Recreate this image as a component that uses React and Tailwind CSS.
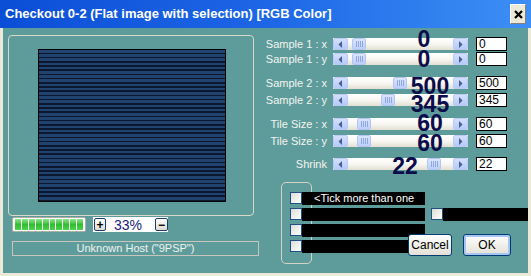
import React from 'react';

const rows = [
    { label: 'Sample 1 : x', value: '0', thumb: 19, rowCls: 'mt-0', numCls: 'top-[-10px] left-[61px]' },
    { label: 'Sample 1 : y', value: '0', thumb: 19, rowCls: 'mt-px', numCls: 'top-[-5px] left-[61px]' },
    { label: 'Sample 2 : x', value: '500', thumb: 60, rowCls: 'mt-[10px]', numCls: 'top-[-2px] left-[67px]' },
    { label: 'Sample 2 : y', value: '345', thumb: 48, rowCls: 'mt-[3px]', numCls: 'top-[-1px] left-[67px]' },
    { label: 'Tile Size : x', value: '60', thumb: 24, rowCls: 'mt-[10px]', numCls: 'top-[-6px] left-[67px]' },
    { label: 'Tile Size : y', value: '60', thumb: 24, rowCls: 'mt-[3px]', numCls: 'top-[-3px] left-[67px]' },
    { label: 'Shrink', value: '22', thumb: 94, rowCls: 'mt-[9px]', numCls: 'top-[-3px] left-[42px]' },
];

const ArrowBtn = ({ dir }) => (
    <div className="z-10 flex h-[12px] w-[15px] items-center justify-center rounded-[2px] border border-[#b9cbf4] bg-gradient-to-b from-[#d3dffc] to-[#b6cafa]">
        <svg width="5" height="7" viewBox="0 0 5 7">
            {dir === 'left'
                ? <polygon points="4,0 4,7 0.5,3.5" fill="#4a5f8a" />
                : <polygon points="1,0 1,7 4.5,3.5" fill="#4a5f8a" />}
        </svg>
    </div>
);

const Slider = ({ thumb, value, numCls }) => (
    <div className="relative ml-[6px] flex h-[12px] w-[135px] justify-between bg-gradient-to-b from-white via-[#f8f7f2] to-[#e2dfd2]">
        <ArrowBtn dir="left" />
        <div
            className="absolute top-0 flex h-[12px] w-[14px] items-center justify-center gap-px rounded-[2px] border border-[#b3c6f3] bg-gradient-to-b from-[#dbe5fd] to-[#bccffa]"
            style={{ left: thumb }}
        >
            <div className="h-[6px] w-px bg-[#8ea8e6]" />
            <div className="h-[6px] w-px bg-[#8ea8e6]" />
            <div className="h-[6px] w-px bg-[#8ea8e6]" />
            <div className="h-[6px] w-px bg-[#8ea8e6]" />
        </div>
        <ArrowBtn dir="right" />
        <span className={`absolute z-20 w-[60px] text-center text-[23px] font-bold leading-[23px] text-[#0c0c4a] ${numCls}`}>
            {value}
        </span>
    </div>
);

const Checkbox = () => (
    <div className="h-[12px] w-[12px] shrink-0 border border-[#1c5180] bg-gradient-to-br from-[#dcdcd6] to-white" />
);

const XpButton = ({ label, def, className }) => (
    <div
        className={`absolute flex items-center justify-center rounded-[3px] border border-[#003c74] bg-gradient-to-b from-white to-[#e3e0d6] text-[12px] text-black ${def ? 'shadow-[inset_0_0_0_2px_#a8c4f2]' : ''} ${className}`}
    >
        {label}
    </div>
);

const App = () => {
    return (
        <div className="flex h-[276px] w-[531px] flex-col overflow-hidden bg-[#ece9d8] font-['Liberation_Sans',Arial,sans-serif]">
            {/* Title bar */}
            <div className="flex h-[28px] shrink-0 items-center justify-between bg-gradient-to-r from-[#0b4ed6] via-[#1d66e6] to-[#3d8ff5] pl-[5px] pr-[5px]">
                <span className="text-[13px] font-bold text-white">
                    Checkout 0-2 (Flat image with selection) [RGB Color]
                </span>
                <div className="flex h-[20px] w-[16px] items-center justify-center border-t border-l border-white border-r border-b border-r-[#808080] border-b-[#808080] bg-[#ece9d8]">
                    <svg width="9" height="9" viewBox="0 0 9 9">
                        <path d="M1 1 L8 8 M8 1 L1 8" stroke="#000" strokeWidth="2.2" />
                    </svg>
                </div>
            </div>

            {/* Body */}
            <div className="relative mx-[3px] flex h-[245px] bg-[#5e9c9c]">
                {/* Left column */}
                <div className="flex w-[251px] shrink-0 flex-col pl-[5px] pt-[7px]">
                    <div className="h-[181px] w-[246px] rounded-[4px] border border-[#dcd8c8] pl-[29px] pt-[13px]">
                        <div className="h-[153px] w-[188px] border border-black bg-[repeating-linear-gradient(to_bottom,#21436f_0px,#21436f_2.6px,#0a172e_2.6px,#0a172e_4.2px)]" />
                    </div>
                    <div className="ml-[4px] mt-px flex items-center">
                        <div className="flex h-[15px] w-[74px] items-center gap-px rounded-[2px] border border-[#b0aea4] bg-white px-[2px]">
                            {Array.from({ length: 10 }).map((_, i) => (
                                <div key={i} className="h-[11px] w-[6px] bg-gradient-to-b from-[#8be38b] via-[#2fbf2f] to-[#4fd14f]" />
                            ))}
                        </div>
                        <div className="ml-[7px] flex h-[15px] w-[75px] items-center bg-white pl-px">
                            <div className="flex h-[13px] w-[12px] items-center justify-center rounded-[2px] border border-[#1c3f6e] bg-gradient-to-b from-white to-[#dedbd0] text-[12px] font-bold leading-none text-black">
                                +
                            </div>
                            <span className="ml-[4px] w-[36px] text-center text-[14px] leading-none text-[#1c1c7a]">33%</span>
                            <div className="ml-[9px] flex h-[13px] w-[13px] items-center justify-center rounded-[2px] border border-[#1c3f6e] bg-gradient-to-b from-white to-[#dedbd0] text-[12px] font-bold leading-none text-black">
                                −
                            </div>
                        </div>
                    </div>
                    <div className="ml-[4px] mt-[9px] flex h-[15px] w-[247px] items-center justify-center border border-[#c8c6bc] text-[11px] text-[#f2f2ee]">
                        Unknown Host ("9PSP")
                    </div>
                </div>

                {/* Right column */}
                <div className="flex flex-col pt-[9px]">
                    {rows.map((r) => (
                        <div key={r.label} className={`flex h-[14px] items-center ${r.rowCls}`}>
                            <span className="w-[73px] whitespace-nowrap text-right text-[11px] text-[#f4f4ef]">{r.label}</span>
                            <Slider thumb={r.thumb} value={r.value} numCls={r.numCls} />
                            <div className="ml-[8px] h-[14px] w-[31px] border border-black bg-white pl-[2px] text-[12px] leading-[12px] text-black">
                                {r.value}
                            </div>
                        </div>
                    ))}

                    {/* Checkbox group */}
                    <div className="ml-[27px] mt-[11px] h-[82px] w-[31px] rounded-[5px] border border-[#d6d2c2] pl-[8px] pt-[9px]">
                        <div className="flex w-max flex-col gap-[3px]">
                            <div className="flex h-[13px] items-start">
                                <Checkbox />
                                <div className="flex h-[13px] w-[123px] items-center bg-black pl-[12px] text-[11px] text-white">
                                    &lt;Tick more than one
                                </div>
                            </div>
                            <div className="flex h-[13px] items-start">
                                <Checkbox />
                                <div className="h-[13px] w-[123px] bg-black" />
                                <div className="ml-[6px]">
                                    <Checkbox />
                                </div>
                                <div className="h-[13px] w-[85px] bg-black" />
                            </div>
                            <div className="flex h-[13px] items-start">
                                <Checkbox />
                                <div className="h-[13px] w-[123px] bg-black" />
                            </div>
                            <div className="flex h-[13px] items-start">
                                <Checkbox />
                                <div className="h-[13px] w-[108px] bg-black" />
                            </div>
                        </div>
                    </div>
                </div>

                <XpButton label="Cancel" className="left-[405px] top-[206px] h-[22px] w-[44px]" />
                <XpButton label="OK" def className="left-[460px] top-[206px] h-[22px] w-[48px]" />
            </div>
        </div>
    );
};

export default App;
